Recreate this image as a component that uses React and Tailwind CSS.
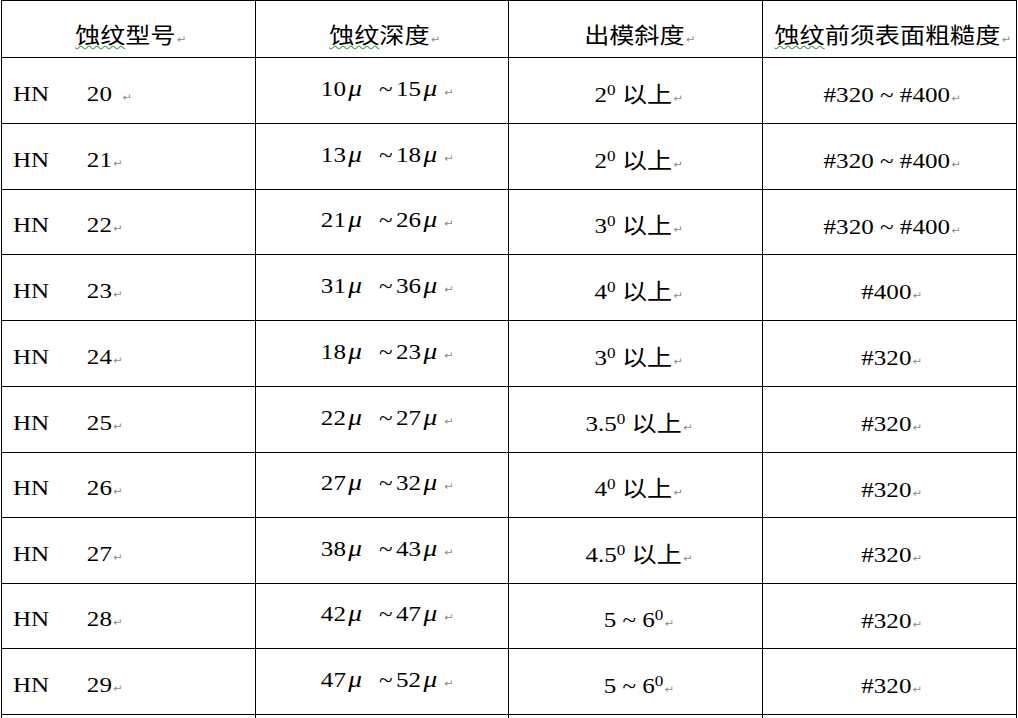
const rows = [
  { n: '20', gap: true, d: ['10', '15'], deg: '2', tail: ' 以上', r: '#320 ~ #400', h: 'h-[66px]' },
  { n: '21', d: ['13', '18'], deg: '2', tail: ' 以上', r: '#320 ~ #400', h: 'h-[66px]' },
  { n: '22', d: ['21', '26'], deg: '3', tail: ' 以上', r: '#320 ~ #400', h: 'h-[65px]' },
  { n: '23', d: ['31', '36'], deg: '4', tail: ' 以上', r: '#400', h: 'h-[66px]' },
  { n: '24', d: ['18', '23'], deg: '3', tail: ' 以上', r: '#320', h: 'h-[66px]' },
  { n: '25', d: ['22', '27'], deg: '3.5', tail: ' 以上', r: '#320', h: 'h-[66px]' },
  { n: '26', d: ['27', '32'], deg: '4', tail: ' 以上', r: '#320', h: 'h-[65px]' },
  { n: '27', d: ['38', '43'], deg: '4.5', tail: ' 以上', r: '#320', h: 'h-[66px]' },
  { n: '28', d: ['42', '47'], deg: '5 ~ 6', tail: '', r: '#320', h: 'h-[65px]' },
  { n: '29', d: ['47', '52'], deg: '5 ~ 6', tail: '', r: '#320', h: 'h-[66px]' },
]

const cols = ['w-[254px]', 'w-[253px]', 'w-[254px]', 'w-[254px]']

// the source document is a slightly widened page, so text runs are stretched on x
const stretch = 'inline-block whitespace-pre scale-x-[1.14]'

function Mark({ className = 'ml-px' }) {
  return (
    <span className={`${className} font-[family-name:DejaVu_Sans,sans-serif] text-[10px] text-[#8a8a8a]`}>
      ↵
    </span>
  )
}

function Wavy({ children }) {
  return (
    <span className="underline decoration-wavy decoration-[#3aa13a] decoration-1 underline-offset-[2px]">
      {children}
    </span>
  )
}

function Cell({ i, className = '', children }) {
  return (
    <div
      className={`${cols[i]} flex h-full shrink-0 items-center border-r border-black ${className}`}
    >
      {children}
    </div>
  )
}

export default function App() {
  return (
    <div className="h-[718px] w-[1018px] overflow-hidden bg-white font-[family-name:Liberation_Serif,Noto_Sans_CJK_SC,serif] text-[22px] leading-[28px] text-black">
      <div className="ml-px w-[1016px] border-l border-t border-black">
        <div className="flex h-[57px] border-b border-black">
          <Cell i={0} className="justify-center pl-[5px] pt-[18px]">
            <span className={stretch}>
              <Wavy>蚀纹</Wavy>型号
              <Mark />
            </span>
          </Cell>
          <Cell i={1} className="justify-center pl-[6px] pt-[18px]">
            <span className={stretch}>
              <Wavy>蚀纹</Wavy>深度
              <Mark />
            </span>
          </Cell>
          <Cell i={2} className="justify-center pl-[9px] pt-[18px]">
            <span className={stretch}>
              出模斜度
              <Mark />
            </span>
          </Cell>
          <Cell i={3} className="justify-center pl-[6px] pt-[18px]">
            <span className={stretch}>
              <Wavy>蚀纹</Wavy>前须表面粗糙度
              <Mark />
            </span>
          </Cell>
        </div>

        {rows.map((row) => (
          <div key={row.n} className={`flex ${row.h} border-b border-black`}>
            <Cell i={0} className="pl-[11px] pt-[10px]">
              <span className={`${stretch} origin-left`}>
                HN
                <span className="ml-[33px]">{row.n}</span>
                <Mark className={row.gap ? 'ml-[9px]' : 'ml-px'} />
              </span>
            </Cell>
            <Cell i={1} className="justify-center pb-[1px] pl-[10px]">
              <span className={stretch}>
                {row.d[0]}
                <i className="ml-[2px] text-[24px]">μ</i>
                <span className="ml-[15px]">~</span>
                <span className="ml-[3px]">{row.d[1]}</span>
                <i className="ml-[2px] text-[24px]">μ</i>
                <Mark className="ml-[6px]" />
              </span>
            </Cell>
            <Cell i={2} className="justify-center pl-[7px] pt-[12px]">
              <span className={stretch}>
                {row.deg}
                <sup className="relative -top-[7px] align-baseline text-[15px]">0</sup>
                {row.tail}
                <Mark />
              </span>
            </Cell>
            <Cell i={3} className="justify-center pl-[5px] pt-[13px]">
              <span className={stretch}>
                {row.r}
                <Mark />
              </span>
            </Cell>
          </div>
        ))}

        <div className="flex h-[66px] border-b border-black">
          <Cell i={0} />
          <Cell i={1} />
          <Cell i={2} />
          <Cell i={3} />
        </div>
      </div>
    </div>
  )
}
